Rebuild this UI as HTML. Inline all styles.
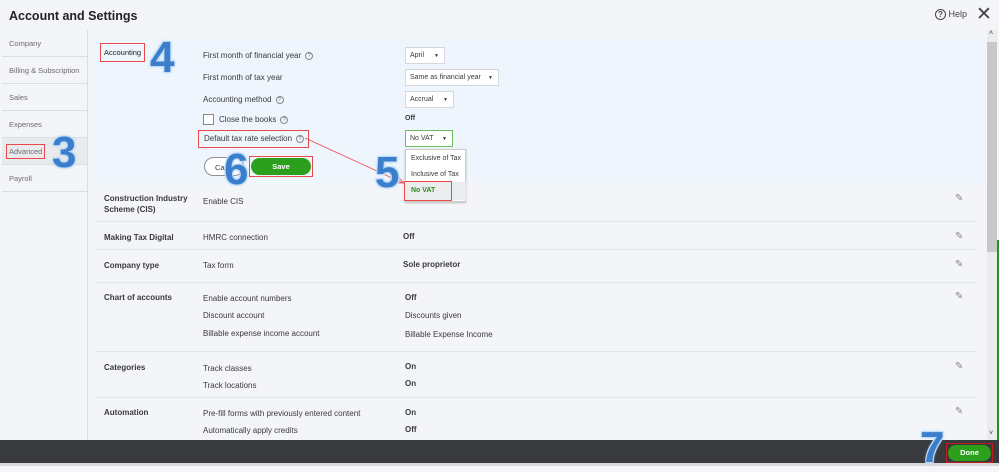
<!DOCTYPE html>
<html><head><meta charset="utf-8"><style>
*{margin:0;padding:0;box-sizing:border-box}
body{width:999px;height:466px;overflow:hidden;background:#f4f5f8;font-family:"Liberation Sans",sans-serif;color:#393a3d;position:relative;font-size:8px}
.a{position:absolute;white-space:nowrap}
.b{font-weight:bold}
.side{position:absolute;left:2px;top:30px;width:86px;height:410px;border-right:1px solid #dcdde0}
.side div{height:27px;border-bottom:1px solid #dcdde0;padding:9px 0 0 7px;color:#6b6c72;font-size:7.5px}
.sel{position:absolute;background:#fff;border:1px solid #d4d7dc;height:17px;padding:4px 0 0 4px;font-size:7px}
.sel span{position:absolute;right:5px;top:5px;font-size:5px}
.hl{border:1px solid #e84a4a}
.num{position:absolute;font-size:44px;font-weight:bold;color:#3b7fcc;font-family:"Liberation Sans",sans-serif;text-shadow:-1px -1px 0 #bcdcf7,1px -1px 0 #bcdcf7,-1px 1px 0 #bcdcf7,1px 1px 0 #bcdcf7,0 0 3px #9cc9f0;line-height:1}
.line{position:absolute;left:96px;width:880px;height:1px;background:#e3e5e9}
.q{display:inline-block;width:8px;height:8px;border:1px solid #888;border-radius:50%;font-size:5px;text-align:center;line-height:6px;margin-left:4px;color:#666;vertical-align:middle}
.pen{position:absolute;left:955px;font-size:10px;color:#888}
</style></head><body>
<div class="a b" style="left:9px;top:9px;font-size:12.5px;color:#222">Account and Settings</div>
<div class="a" style="left:935px;top:9px;font-size:9px;color:#444"><span style="display:inline-block;width:11px;height:11px;border:1.3px solid #444;border-radius:50%;font-size:8px;text-align:center;line-height:9px;font-weight:bold">?</span> Help</div>
<div class="a" style="left:976px;top:3px;font-size:19px;color:#444">✕</div>
<div class="side"><div>Company</div><div>Billing &amp; Subscription</div><div>Sales</div><div>Expenses</div><div style="background:#e9eaed"><span class="hl" style="padding:2px 2px;margin-left:-3px">Advanced</span></div><div>Payroll</div></div>
<div class="a" style="left:96px;top:38px;width:889px;height:145px;background:#eff5fc"></div>
<div class="a hl" style="left:100px;top:43px;padding:4px 3px;font-size:7.5px;color:#222">Accounting</div>
<div class="a" style="left:203px;top:51px">First month of financial year<span class="q">?</span></div>
<div class="a" style="left:203px;top:73px">First month of tax year</div>
<div class="a" style="left:203px;top:95px">Accounting method<span class="q">?</span></div>
<div class="a" style="left:203px;top:114px;width:11px;height:11px;border:1px solid #888;background:#fff"></div>
<div class="a" style="left:219px;top:115px">Close the books<span class="q">?</span></div>
<div class="a hl" style="left:198px;top:130px;padding:3px 4px 4px 5px">Default tax rate selection<span class="q">?</span></div>
<div class="sel" style="left:405px;top:47px;width:40px">April<span>▼</span></div>
<div class="sel" style="left:405px;top:69px;width:94px">Same as financial year<span>▼</span></div>
<div class="sel" style="left:405px;top:91px;width:49px">Accrual<span>▼</span></div>
<div class="a b" style="left:405px;top:115px;font-size:7px">Off</div>
<div class="sel" style="left:405px;top:130px;width:48px;border-color:#6bbf5e">No VAT<span>▼</span></div>
<div class="a" style="left:405px;top:149px;width:61px;height:53px;background:#fff;border:1px solid #ccc;box-shadow:0 1px 2px #bbb"></div>
<div class="a" style="left:411px;top:155px;font-size:7px">Exclusive of Tax</div>
<div class="a" style="left:411px;top:171px;font-size:7px">Inclusive of Tax</div>
<div class="a" style="left:405px;top:182px;width:61px;height:18px;background:#ebecee"></div>
<div class="a hl b" style="left:404px;top:181px;width:48px;height:20px;padding:5px 0 0 6px;color:#2e8b1e;font-size:7px">No VAT</div>
<svg class="a" style="left:300px;top:135px" width="110" height="55"><path d="M5 3 L103 48" stroke="#e84a4a" stroke-width="0.8" fill="none"/><path d="M98 42 L104 48 L96 48" stroke="#e84a4a" stroke-width="0.8" fill="none"/></svg>
<div class="a" style="left:204px;top:157px;width:40px;height:19px;border:1px solid #8d9096;border-radius:10px;background:#fff;padding:5px 0 0 10px;font-size:7.5px">Ca</div>
<div class="a hl" style="left:249px;top:156px;width:64px;height:21px"></div>
<div class="a b" style="left:251px;top:158px;width:60px;height:17px;background:#2ca01c;border-radius:9px;color:#fff;text-align:center;line-height:17px;font-size:7.5px">Save</div>
<div class="num" style="left:150px;top:36px">4</div>
<div class="num" style="left:52px;top:131px">3</div>
<div class="num" style="left:224px;top:148px">6</div>
<div class="num" style="left:375px;top:151px">5</div>
<div class="a b" style="left:104px;top:193px;line-height:11px">Construction Industry<br>Scheme (CIS)</div>
<div class="a" style="left:203px;top:197px">Enable CIS</div>
<div class="pen" style="top:193px">✎</div>
<div class="line" style="top:221px"></div>
<div class="a b" style="left:104px;top:233px">Making Tax Digital</div>
<div class="a" style="left:203px;top:233px">HMRC connection</div>
<div class="a b" style="left:403px;top:232px">Off</div>
<div class="pen" style="top:231px">✎</div>
<div class="line" style="top:249px"></div>
<div class="a b" style="left:104px;top:261px">Company type</div>
<div class="a" style="left:203px;top:261px">Tax form</div>
<div class="a b" style="left:403px;top:260px">Sole proprietor</div>
<div class="pen" style="top:259px">✎</div>
<div class="line" style="top:282px"></div>
<div class="a b" style="left:104px;top:293px">Chart of accounts</div>
<div class="a" style="left:203px;top:294px">Enable account numbers</div>
<div class="a" style="left:203px;top:311px">Discount account</div>
<div class="a" style="left:203px;top:329px">Billable expense income account</div>
<div class="a b" style="left:405px;top:293px">Off</div>
<div class="a" style="left:405px;top:311px">Discounts given</div>
<div class="a" style="left:405px;top:330px">Billable Expense Income</div>
<div class="pen" style="top:291px">✎</div>
<div class="line" style="top:351px"></div>
<div class="a b" style="left:104px;top:363px">Categories</div>
<div class="a" style="left:203px;top:364px">Track classes</div>
<div class="a" style="left:203px;top:381px">Track locations</div>
<div class="a b" style="left:405px;top:362px">On</div>
<div class="a b" style="left:405px;top:379px">On</div>
<div class="pen" style="top:361px">✎</div>
<div class="line" style="top:397px"></div>
<div class="a b" style="left:104px;top:408px">Automation</div>
<div class="a" style="left:203px;top:409px">Pre-fill forms with previously entered content</div>
<div class="a" style="left:203px;top:426px">Automatically apply credits</div>
<div class="a b" style="left:405px;top:408px">On</div>
<div class="a b" style="left:405px;top:425px">Off</div>
<div class="pen" style="top:406px">✎</div>
<div class="a" style="left:987px;top:30px;width:10px;height:410px;background:#ececec"></div>
<div class="a" style="left:987px;top:42px;width:10px;height:210px;background:#c8c8c8"></div>
<div class="a" style="left:989px;top:30px;font-size:7px">˄</div>
<div class="a" style="left:989px;top:430px;font-size:7px">˅</div>
<div class="a" style="left:997px;top:240px;width:2px;height:200px;background:#2b8c28"></div>
<div class="a" style="left:0;top:440px;width:999px;height:23px;background:#393a3d"></div>
<div class="a" style="left:0;top:463px;width:999px;height:3px;background:#d8d8d8"></div>
<div class="a" style="left:946px;top:443px;width:47px;height:20px;border:1px solid #c21d1d"></div>
<div class="a b" style="left:948px;top:445px;width:43px;height:16px;background:#2ca01c;border-radius:8px;color:#fff;text-align:center;line-height:16px;font-size:7.5px">Done</div>
<div class="num" style="left:920px;top:426px">7</div>
</body></html>
